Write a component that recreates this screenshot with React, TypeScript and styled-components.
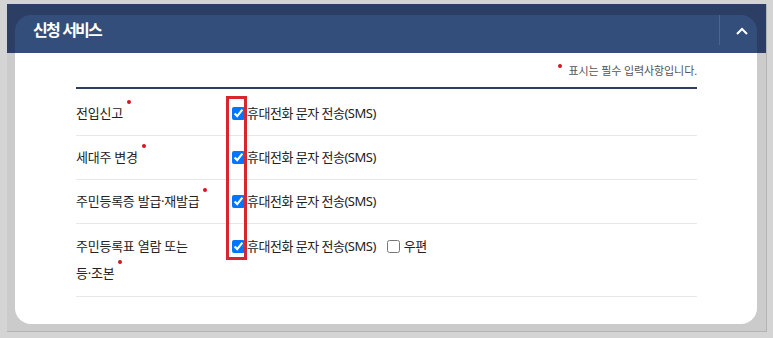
import React from "react";
import styled, { createGlobalStyle } from "styled-components";

const Global = createGlobalStyle`
  html, body { margin: 0; padding: 0; background: #d4d4d4; }
  body { font-family: "Noto Sans", "Noto Sans CJK KR", sans-serif; color: #222; }
  * { box-sizing: border-box; }
`;

const Frame = styled.div`
  margin: 4px 0 0 7px;
  width: 760px;
  padding: 11px 9px 7px 8px;
  border-right: 1px solid #b4b4b4;
  border-bottom: 1px solid #b4b4b4;
  background: linear-gradient(#2c3e64 0 49px, #cbcbcb 49px);
`;

const Card = styled.section`
  display: flex;
  flex-direction: column;
`;

const Header = styled.header`
  display: flex;
  align-items: flex-start;
  height: 38px;
  padding-left: 18px;
  background: #344e7c;
  border-radius: 16px 16px 0 0;
`;

const Title = styled.h2`
  flex: 1;
  margin: 0;
  font-size: 16px;
  line-height: 30px;
  font-weight: 700;
  letter-spacing: -1.8px;
  word-spacing: 1px;
  color: #fff;
`;

const ToggleButton = styled.button`
  display: flex;
  align-items: center;
  justify-content: center;
  width: 38px;
  height: 30px;
  padding: 2px 0 0 6px;
  border: 0;
  border-left: 1px solid #4b6491;
  background: transparent;
  cursor: pointer;
`;

const Body = styled.div`
  background: #fff;
  border-radius: 0 0 16px 16px;
  padding: 0 60px 27px 61px;
`;

const Note = styled.p`
  margin: 0;
  padding: 11px 0 9px;
  text-align: right;
  font-size: 11px;
  line-height: 14px;
  letter-spacing: -0.1px;
  color: #555;
`;

const Dot = styled.span`
  display: inline-block;
  width: 4px;
  height: 4px;
  margin-left: 4px;
  border-radius: 50%;
  background: #d4161d;
  vertical-align: top;
`;

const NoteDot = styled(Dot)`
  margin: 0 6px 0 0;
`;

const Table = styled.div`
  position: relative;
  border-top: 2px solid #2c3e64;
  padding-top: 3px;
`;

const Row = styled.div`
  display: grid;
  grid-template-columns: 152px 1fr;
  padding: 8px 0;
  line-height: 27px;
  border-bottom: 1px solid #e8e8e8;

  &:last-of-type {
    padding: 9px 0;
  }
`;

const Label = styled.div`
  padding-right: 12px;
  font-size: 13px;
  letter-spacing: -0.25px;
  color: #222;
`;

const NoWrap = styled.span`
  white-space: nowrap;
`;

const Options = styled.div`
  display: flex;
  align-items: flex-start;
  gap: 11px;
`;

const Option = styled.label`
  display: flex;
  align-items: center;
  height: 27px;
  font-size: 13px;
  letter-spacing: -0.5px;
  white-space: nowrap;
  color: #222;
`;

const Check = styled.input.attrs({ type: "checkbox" })<{ $gapLeft?: number; $gapRight?: number }>`
  width: 13px;
  height: 13px;
  margin: 0 ${(p) => p.$gapRight ?? 2}px 0 ${(p) => p.$gapLeft ?? 4}px;
`;

const Highlight = styled.span`
  position: absolute;
  left: 150px;
  top: 7px;
  width: 21px;
  height: 164px;
  border: 3px solid #d7262d;
  pointer-events: none;
`;

const rows = [
  { label: "전입신고", post: false },
  { label: "세대주 변경", post: false },
  { label: "주민등록증 발급·재발급", post: false },
  { label: "주민등록표 열람 또는 등·조본", post: true },
];

function RequiredLabel({ text }: { text: string }) {
  const idx = text.lastIndexOf(" ");
  const head = text.slice(0, idx + 1);
  const tail = text.slice(idx + 1);
  return (
    <Label>
      {head}
      <NoWrap>
        {tail}
        <Dot />
      </NoWrap>
    </Label>
  );
}

export default function App() {
  return (
    <>
      <Global />
      <Frame>
        <Card>
          <Header>
            <Title>신청 서비스</Title>
            <ToggleButton aria-label="접기">
              <svg width="12" height="8" viewBox="0 0 12 8">
                <polyline points="1,7 6,2 11,7" fill="none" stroke="#fff" strokeWidth="2" />
              </svg>
            </ToggleButton>
          </Header>
          <Body>
            <Note>
              <NoteDot />표시는 필수 입력사항입니다.
            </Note>
            <Table>
              <Highlight />
              {rows.map((r) => (
                <Row key={r.label}>
                  <RequiredLabel text={r.label} />
                  <Options>
                    <Option>
                      <Check defaultChecked />
                      휴대전화 문자 전송(SMS)
                    </Option>
                    {r.post && (
                      <Option>
                        <Check $gapLeft={0} $gapRight={4} />
                        우편
                      </Option>
                    )}
                  </Options>
                </Row>
              ))}
            </Table>
          </Body>
        </Card>
      </Frame>
    </>
  );
}
